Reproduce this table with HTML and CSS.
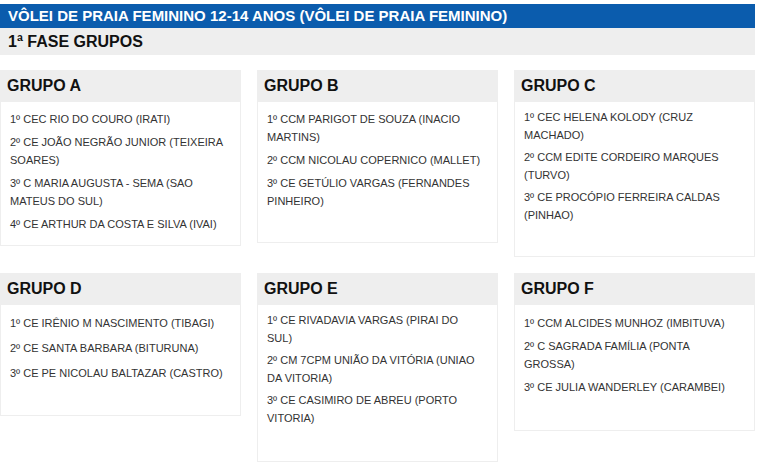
FILE: index.html
```html
<!DOCTYPE html>
<html lang="pt">
<head>
<meta charset="utf-8">
<title>Vôlei de Praia Feminino 12-14 anos</title>
<link rel="stylesheet" href="styles.css">
</head>
<body>
<div class="page">
  <div class="title-bar">VÔLEI DE PRAIA FEMININO 12-14 ANOS (VÔLEI DE PRAIA FEMININO)</div>
  <div class="phase-bar">1ª FASE GRUPOS</div>
  <div class="grid">
    <div class="card card-a">
      <div class="card-head">GRUPO A</div>
      <ul class="card-body">
        <li>1º CEC RIO DO COURO (IRATI)</li>
        <li>2º CE JOÃO NEGRÃO JUNIOR (TEIXEIRA SOARES)</li>
        <li>3º C MARIA AUGUSTA - SEMA (SAO MATEUS DO SUL)</li>
        <li>4º CE ARTHUR DA COSTA E SILVA (IVAI)</li>
      </ul>
    </div>
    <div class="card card-b">
      <div class="card-head">GRUPO B</div>
      <ul class="card-body">
        <li>1º CCM PARIGOT DE SOUZA (INACIO MARTINS)</li>
        <li>2º CCM NICOLAU COPERNICO (MALLET)</li>
        <li>3º CE GETÚLIO VARGAS (FERNANDES PINHEIRO)</li>
      </ul>
    </div>
    <div class="card card-c">
      <div class="card-head">GRUPO C</div>
      <ul class="card-body">
        <li>1º CEC HELENA KOLODY (CRUZ MACHADO)</li>
        <li>2º CCM EDITE CORDEIRO MARQUES (TURVO)</li>
        <li>3º CE PROCÓPIO FERREIRA CALDAS (PINHAO)</li>
      </ul>
    </div>
    <div class="card card-d">
      <div class="card-head">GRUPO D</div>
      <ul class="card-body">
        <li>1º CE IRÊNIO M NASCIMENTO (TIBAGI)</li>
        <li>2º CE SANTA BARBARA (BITURUNA)</li>
        <li>3º CE PE NICOLAU BALTAZAR (CASTRO)</li>
      </ul>
    </div>
    <div class="card card-e">
      <div class="card-head">GRUPO E</div>
      <ul class="card-body">
        <li>1º CE RIVADAVIA VARGAS (PIRAI DO SUL)</li>
        <li>2º CM 7CPM UNIÃO DA VITÓRIA (UNIAO DA VITORIA)</li>
        <li>3º CE CASIMIRO DE ABREU (PORTO VITORIA)</li>
      </ul>
    </div>
    <div class="card card-f">
      <div class="card-head">GRUPO F</div>
      <ul class="card-body">
        <li>1º CCM ALCIDES MUNHOZ (IMBITUVA)</li>
        <li>2º C SAGRADA FAMÍLIA (PONTA GROSSA)</li>
        <li>3º CE JULIA WANDERLEY (CARAMBEI)</li>
      </ul>
    </div>
  </div>
</div>
</body>
</html>
```

FILE: styles.css
```css
* { box-sizing: border-box; }
html, body {
  margin: 0;
  padding: 0;
  background: #ffffff;
  font-family: "Liberation Sans", Arial, sans-serif;
}
.page {
  width: 755px;
  padding-top: 4px;
}
.title-bar {
  background: #0b5cad;
  color: #ffffff;
  font-weight: bold;
  font-size: 15px;
  height: 24px;
  line-height: 24px;
  padding-left: 8px;
}
.phase-bar {
  background: #eeeeee;
  color: #111111;
  font-weight: bold;
  font-size: 16px;
  height: 27px;
  line-height: 27px;
  padding-left: 8px;
}
.grid {
  display: grid;
  grid-template-columns: 241px 241px 241px;
  column-gap: 16px;
  row-gap: 16px;
  margin-top: 15px;
  align-items: start;
}
.card {
  background: #ffffff;
  border: 1px solid #eeeeee;
  border-top: none;
}
.card-head {
  background: #eeeeee;
  color: #111111;
  font-weight: bold;
  font-size: 16px;
  height: 32px;
  line-height: 32px;
  padding-left: 7px;
  margin: 0 -1px;
}
.card-body {
  list-style: none;
  margin: 0;
  padding: 8px 13px 4px 9px;
  font-size: 11px;
  line-height: 18px;
  color: #333333;
}
.card-body li {
  margin-bottom: 5px;
}
.card-a .card-body { min-height: 143px; }
.card-b .card-body { min-height: 140px; }
.card-c .card-body { min-height: 154px; padding-top: 6px; }
.card-c .card-body li { margin-bottom: 4px; }
.card-d .card-body { min-height: 110px; padding-top: 9px; }
.card-d .card-body li { margin-bottom: 7px; }
.card-e .card-body { min-height: 156px; padding-top: 6px; }
.card-e .card-body li { margin-bottom: 4px; }
.card-f .card-body { min-height: 125px; padding-top: 9px; }
```
